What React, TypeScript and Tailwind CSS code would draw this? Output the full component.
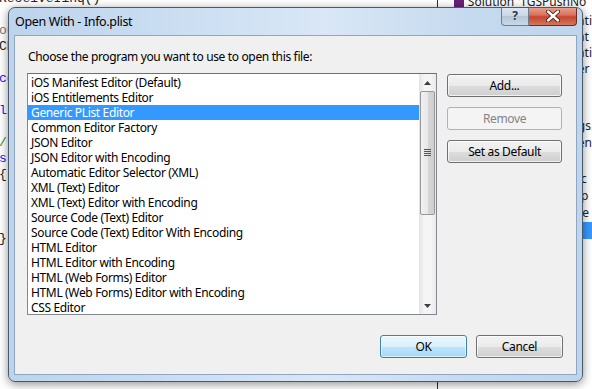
import React from "react";

const items = [
  "iOS Manifest Editor (Default)",
  "iOS Entitlements Editor",
  "Generic PList Editor",
  "Common Editor Factory",
  "JSON Editor",
  "JSON Editor with Encoding",
  "Automatic Editor Selector (XML)",
  "XML (Text) Editor",
  "XML (Text) Editor with Encoding",
  "Source Code (Text) Editor",
  "Source Code (Text) Editor With Encoding",
  "HTML Editor",
  "HTML Editor with Encoding",
  "HTML (Web Forms) Editor",
  "HTML (Web Forms) Editor with Encoding",
  "CSS Editor",
];

const codeLines: { t: string; c: string }[] = [
  { t: "ReceiveIinq()", c: "text-[#222]" },
  { t: "", c: "" },
  { t: "ou", c: "text-[#777]" },
  { t: "CK", c: "text-[#222]" },
  { t: "", c: "" },
  { t: "ce", c: "text-[#1a1aff]" },
  { t: "", c: "" },
  { t: "li", c: "text-[#1a1aff]" },
  { t: "", c: "" },
  { t: "/", c: "text-[#2e8b2e]" },
  { t: "s", c: "text-[#1a1aff]" },
  { t: "{", c: "text-[#222]" },
  { t: "", c: "" },
  { t: "", c: "" },
  { t: "", c: "" },
  { t: "}", c: "text-[#222]" },
];

function Btn({
  children,
  disabled,
  primary,
  className = "",
}: {
  children: React.ReactNode;
  disabled?: boolean;
  primary?: boolean;
  className?: string;
}) {
  let cls =
    "h-[23px] rounded-[3px] border flex items-center justify-center text-[12px] leading-none ";
  if (disabled) {
    cls += "border-[#adb2b5] bg-[#f4f4f4] text-[#838383]";
  } else if (primary) {
    cls +=
      "border-[#3c7fb1] text-black bg-[linear-gradient(to_bottom,#eaf6fd_0%,#d9f0fc_50%,#bee6fd_51%,#a7d9f5_100%)] shadow-[inset_0_0_0_1px_rgba(255,255,255,0.6)]";
  } else {
    cls +=
      "border-[#707070] text-black bg-[linear-gradient(to_bottom,#f2f2f2_0%,#ebebeb_50%,#dddddd_51%,#cfcfcf_100%)] shadow-[inset_0_0_0_1px_rgba(255,255,255,0.7)]";
  }
  return <div className={cls + " " + className}>{children}</div>;
}

function RLine({ t, className = "" }: { t: string; className?: string }) {
  return (
    <div className={"h-[16px] leading-[16px] text-[12px] text-[#222] whitespace-nowrap pl-[140px] " + className}>
      {t}
    </div>
  );
}

export default function App() {
  return (
    <div
      className="relative w-[592px] h-[389px] overflow-hidden bg-white"
      style={{ fontFamily: '"Noto Sans", "Open Sans", sans-serif' }}
    >
      {/* background: editor + solution explorer */}
      <div className="absolute inset-0 flex">
        <div
          className="w-[443px] h-full bg-white -mt-[9px]"
          style={{ fontFamily: '"Liberation Mono", monospace' }}
        >
          {codeLines.map((l, i) => (
            <div key={i} className={"h-[16px] leading-[16px] text-[13px] -ml-[1px] " + l.c}>
              {l.t}
            </div>
          ))}
        </div>
        <div className="w-px h-full bg-[#2b2b3a]" />
        <div className="flex-1 h-full bg-white flex flex-col">
          <div className="flex items-center gap-[4px] pl-[16px] -mt-[6px] h-[16px] text-[12px] text-[#222] whitespace-nowrap overflow-hidden">
            <span className="w-[10px] h-[10px] bg-[#68217a] inline-block shrink-0" />
            <span>Solution 'TGSPushNo</span>
          </div>
          <RLine t="ati" className="mt-[3px]" />
          <RLine t="at" />
          <RLine t="ati" />
          <RLine t="er" />
          <RLine t="gs" className="mt-[41px]" />
          <RLine t="en" className="mt-px" />
          <RLine t="" />
          <RLine t=".c" className="mt-[4px]" />
          <RLine t=".p" className="mt-px" />
          <RLine t="te" className="mt-px" />
          <div className="h-[17px] bg-[#3399ff] mt-[1px]" />
        </div>
      </div>

      {/* dialog */}
      <div
        className="absolute left-[8px] top-[7px] w-[575px] h-[375px] rounded-[7px] border border-[#4a5a6e] shadow-[0_2px_10px_rgba(0,0,0,0.45)] bg-[linear-gradient(to_right,#bdd4ec_0%,#cbdef2_30%,#d9e7f6_55%,#c6daef_80%,#bfd5ec_100%)] flex flex-col overflow-hidden tracking-[-0.35px]"
      >
        {/* title bar */}
        <div className="h-[27px] flex items-start shrink-0">
          <div className="pl-[6px] pt-[6px] text-[12.5px] text-black leading-[16px]">
            Open With - Info.plist
          </div>
          <div className="ml-auto mr-[5px] flex -mt-px tracking-normal">
            <div className="w-[28px] h-[19px] rounded-bl-[4px] border border-[#6d7d90] border-t-0 bg-[linear-gradient(to_bottom,#dce7f2_0%,#c9d7e5_50%,#b4c5d8_51%,#cad9e9_100%)] flex items-center justify-center text-[12px] font-bold text-[#2a3a4e] leading-none">
              ?
            </div>
            <div className="w-[48px] h-[19px] rounded-br-[4px] border border-[#6e2a23] border-t-0 border-l-0 bg-[linear-gradient(to_bottom,#e8a593_0%,#d9705c_45%,#c7442d_55%,#d3775f_100%)] flex items-center justify-center">
              <svg width="14" height="12" viewBox="0 0 14 12">
                <path d="M2 1.5 L12 10.5 M12 1.5 L2 10.5" stroke="#3b1510" strokeWidth="4" strokeLinecap="round" />
                <path d="M2 1.5 L12 10.5 M12 1.5 L2 10.5" stroke="#ffffff" strokeWidth="2.4" strokeLinecap="round" />
              </svg>
            </div>
          </div>
        </div>
        {/* client */}
        <div className="mx-[5px] mb-[6px] flex-1 border border-[#8ea6c2] bg-[#f0f0f0] flex flex-col">
          <div className="pl-[13px] pt-[13px] h-[37px] text-[12px] leading-[16px] text-black">
            Choose the program you want to use to open this file:
          </div>
          <div className="flex pl-[12px]">
            <div className="w-[410px] h-[242px] border border-[#828790] border-t-[#6a6f78] bg-white flex">
              <div className="flex-1 pt-[1px] overflow-hidden">
                {items.map((it, i) => (
                  <div
                    key={i}
                    className={
                      "h-[15px] leading-[15px] text-[12px] pl-[3px] whitespace-nowrap " +
                      (i === 2 ? "bg-[#3399ff] text-white" : "text-black")
                    }
                  >
                    {it}
                  </div>
                ))}
              </div>
              {/* scrollbar */}
              <div className="w-[17px] h-full bg-[linear-gradient(to_right,#e3e3e3,#f5f5f5_30%,#f5f5f5_70%,#e8e8e8)] flex flex-col">
                <div className="h-[17px] flex items-center justify-center">
                  <svg width="7" height="4" viewBox="0 0 7 4">
                    <path d="M0 4 L3.5 0 L7 4 Z" fill="#404040" />
                  </svg>
                </div>
                <div className="mx-[1px] h-[124px] rounded-[2px] border border-[#979797] bg-[linear-gradient(to_right,#f1f1f1,#e8e8e8_50%,#d6d6d6_51%,#cfcfcf)] flex items-center justify-center">
                  <div className="flex flex-col gap-[1px] -mt-[1px]">
                    <div className="w-[7px] h-px bg-[#555]" />
                    <div className="w-[7px] h-px bg-[#555]" />
                    <div className="w-[7px] h-px bg-[#555]" />
                    <div className="w-[7px] h-px bg-[#555]" />
                  </div>
                </div>
                <div className="flex-1" />
                <div className="h-[17px] flex items-center justify-center">
                  <svg width="7" height="4" viewBox="0 0 7 4">
                    <path d="M0 0 L3.5 4 L7 0 Z" fill="#404040" />
                  </svg>
                </div>
              </div>
            </div>
            <div className="ml-[10px] w-[115px] flex flex-col gap-[10px] pt-[1px]">
              <Btn>Add...</Btn>
              <Btn disabled>Remove</Btn>
              <Btn>Set as Default</Btn>
            </div>
          </div>
          <div className="flex justify-end gap-[9px] pr-[13px] mt-[20px]">
            <Btn primary className="w-[87px]">OK</Btn>
            <Btn className="w-[87px]">Cancel</Btn>
          </div>
        </div>
      </div>
    </div>
  );
}
